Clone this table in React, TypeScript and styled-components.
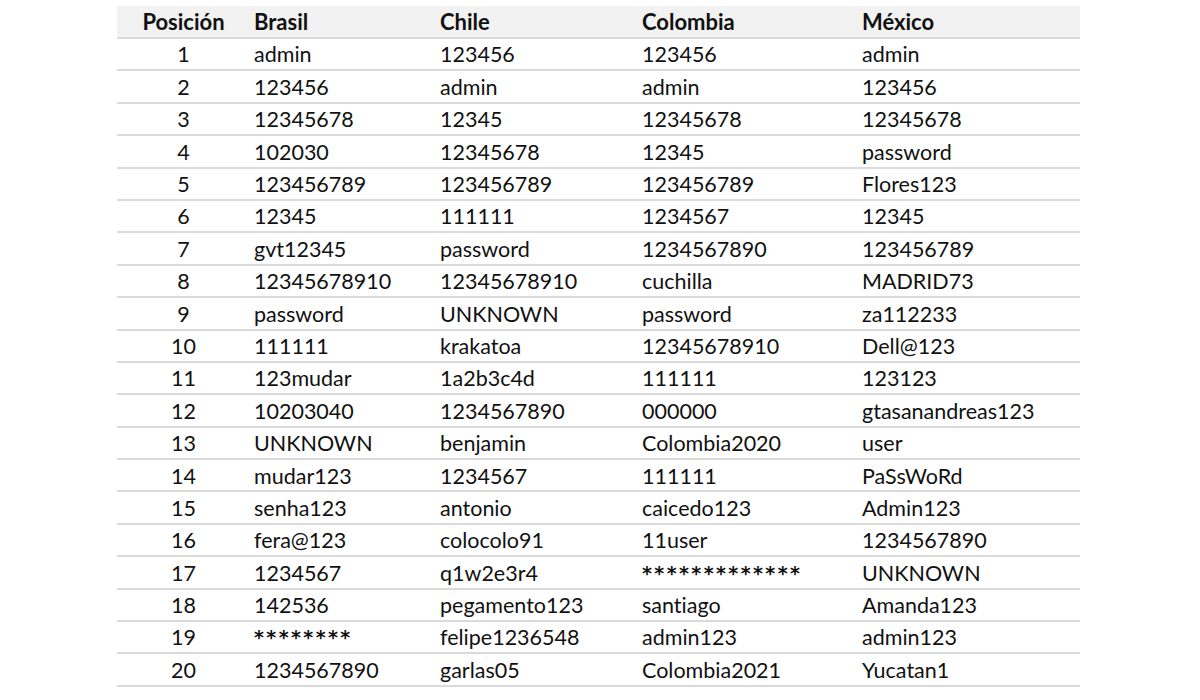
import React from 'react';
import styled, { createGlobalStyle } from 'styled-components';

const GlobalStyle = createGlobalStyle`
  html, body {
    margin: 0;
    padding: 0;
    background: #ffffff;
  }
  body {
    font-family: Lato, "Open Sans", "Liberation Sans", sans-serif;
    font-variant-ligatures: none;
    color: #111111;
  }
`;

const headers = ['Posición', 'Brasil', 'Chile', 'Colombia', 'México'];

const rows: string[][] = [
  ['admin', '123456', '123456', 'admin'],
  ['123456', 'admin', 'admin', '123456'],
  ['12345678', '12345', '12345678', '12345678'],
  ['102030', '12345678', '12345', 'password'],
  ['123456789', '123456789', '123456789', 'Flores123'],
  ['12345', '111111', '1234567', '12345'],
  ['gvt12345', 'password', '1234567890', '123456789'],
  ['12345678910', '12345678910', 'cuchilla', 'MADRID73'],
  ['password', 'UNKNOWN', 'password', 'za112233'],
  ['111111', 'krakatoa', '12345678910', 'Dell@123'],
  ['123mudar', '1a2b3c4d', '111111', '123123'],
  ['10203040', '1234567890', '000000', 'gtasanandreas123'],
  ['UNKNOWN', 'benjamin', 'Colombia2020', 'user'],
  ['mudar123', '1234567', '111111', 'PaSsWoRd'],
  ['senha123', 'antonio', 'caicedo123', 'Admin123'],
  ['fera@123', 'colocolo91', '11user', '1234567890'],
  ['1234567', 'q1w2e3r4', '*************', 'UNKNOWN'],
  ['142536', 'pegamento123', 'santiago', 'Amanda123'],
  ['********', 'felipe1236548', 'admin123', 'admin123'],
  ['1234567890', 'garlas05', 'Colombia2021', 'Yucatan1'],
];

const Page = styled.div`
  padding: 6px 0 0 117px;
`;

const Table = styled.table`
  border-collapse: collapse;
  width: 963px;
  table-layout: fixed;
  font-size: 21.5px;
`;

const Col = styled.col<{ $w: number }>`
  width: ${(p) => p.$w}px;
`;

const HeadRow = styled.tr`
  background: #f2f2f2;
  height: 32px;
`;

const HeadCell = styled.th<{ $center?: boolean }>`
  font-weight: 700;
  font-size: 22px;
  text-align: ${(p) => (p.$center ? 'center' : 'left')};
  padding: 0 0 0 ${(p) => (p.$center ? 0 : 4)}px;
  line-height: 1;
`;

const Row = styled.tr`
  height: 32.4px;
  border-top: 2px solid #dadada;
`;

const Cell = styled.td<{ $center?: boolean }>`
  text-align: ${(p) => (p.$center ? 'center' : 'left')};
  padding: 2px 0 0 ${(p) => (p.$center ? 0 : 4)}px;
  line-height: 1;
  white-space: nowrap;
`;

const Masked = styled.span`
  font-family: "DejaVu Sans", sans-serif;
  font-weight: 700;
  font-size: 19px;
  letter-spacing: 2.4px;
  position: relative;
  top: -1px;
`;

const LastLine = styled.tr`
  border-top: 2px solid #dadada;
`;

const renderValue = (v: string) =>
  /^\*+$/.test(v) ? <Masked>{v}</Masked> : v;

export default function App() {
  return (
    <>
      <GlobalStyle />
      <Page>
        <Table>
          <colgroup>
            <Col $w={133} />
            <Col $w={186} />
            <Col $w={202} />
            <Col $w={220} />
            <Col $w={222} />
          </colgroup>
          <thead>
            <HeadRow>
              {headers.map((h, i) => (
                <HeadCell key={h} $center={i === 0}>
                  {h}
                </HeadCell>
              ))}
            </HeadRow>
          </thead>
          <tbody>
            {rows.map((r, i) => (
              <Row key={i}>
                <Cell $center>{i + 1}</Cell>
                {r.map((v, j) => (
                  <Cell key={j}>{renderValue(v)}</Cell>
                ))}
              </Row>
            ))}
            <LastLine>
              <td colSpan={5} />
            </LastLine>
          </tbody>
        </Table>
      </Page>
    </>
  );
}
